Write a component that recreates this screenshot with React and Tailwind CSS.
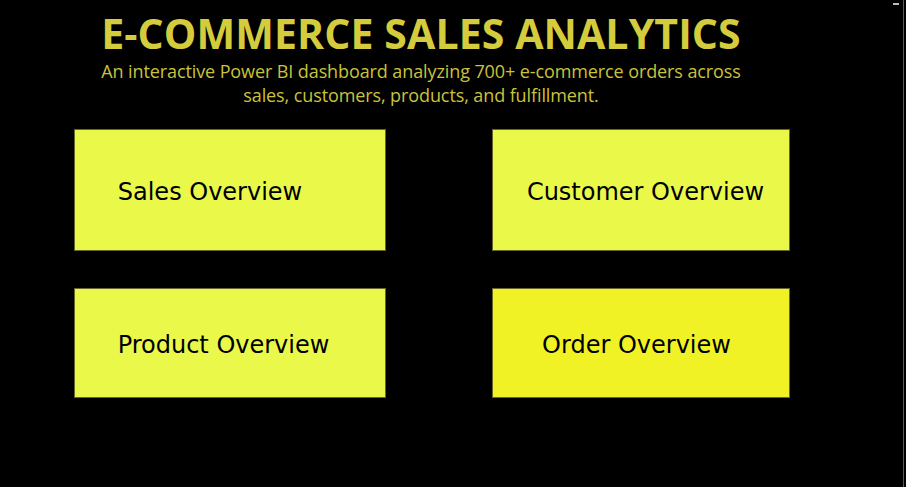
import React from "react";

function Card({ label, bg, shift }) {
  return (
    <div
      className={`flex items-center justify-center border border-[#66662a] ${bg}`}
    >
      <span
        className={`text-[24px] text-black pt-[3px] ${shift}`}
        style={{ fontFamily: '"Comic Sans MS", "DejaVu Sans", sans-serif' }}
      >
        {label}
      </span>
    </div>
  );
}

export default function App() {
  return (
    <div className="relative w-[906px] h-[487px] bg-black overflow-hidden">
      <div className="w-[842px] flex flex-col items-center pt-[8px]">
        <h1
          className="text-[41px] font-bold leading-[50px] text-[#d5cc3d] tracking-[0.1px]"
          style={{ fontFamily: '"Open Sans", "Noto Sans", sans-serif' }}
        >
          E-COMMERCE SALES ANALYTICS
        </h1>
        <p
          className="text-[18px] leading-[24px] text-[#c9c33b] text-center w-[652px] mt-[1px] tracking-[-0.1px]"
          style={{ fontFamily: '"Open Sans", "Noto Sans", sans-serif' }}
        >
          An interactive Power BI dashboard analyzing 700+ e-commerce orders across sales, customers, products, and fulfillment.
        </p>
      </div>
      <div className="grid grid-cols-[312px_298px] grid-rows-[122px_110px] gap-x-[106px] gap-y-[37px] ml-[74px] mt-[22px]">
        <Card label="Sales Overview" bg="bg-[#eaf84a]" shift="mr-[40px]" />
        <Card label="Customer Overview" bg="bg-[#eaf84a]" shift="ml-[9px]" />
        <Card label="Product Overview" bg="bg-[#eaf84a]" shift="mr-[13px]" />
        <Card label="Order Overview" bg="bg-[#f0f226]" shift="mr-[9px]" />
      </div>
      <div className="absolute right-[2px] top-0 w-[1px] h-full bg-[#5a5a5a]" />
      <div className="absolute left-[893px] top-[3px] w-[6px] h-[2px] bg-[#bbbbbb]" />
    </div>
  );
}
